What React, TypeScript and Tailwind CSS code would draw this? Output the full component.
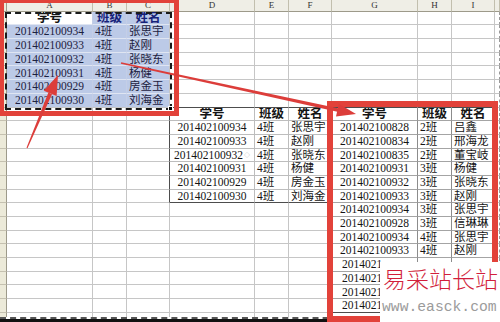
import React from 'react';

const WIDTHS = ['w-[86px]', 'w-[34px]', 'w-[43px]', 'w-[85px]', 'w-[34px]', 'w-[43px]', 'w-[86px]', 'w-[34px]', 'w-[43px]', 'w-[5px]'];
const LETTERS = ['A', 'B', 'C', 'D', 'E', 'F', 'G', 'H', 'I', ''];
const HEAD = ['学号', '班级', '姓名'];

const leftData = [
  ['201402100934', '4班', '张思宇'],
  ['201402100933', '4班', '赵刚'],
  ['201402100932', '4班', '张晓东'],
  ['201402100931', '4班', '杨健'],
  ['201402100929', '4班', '房金玉'],
  ['201402100930', '4班', '刘海金'],
];

const rightData = [
  ['201402100828', '2班', '吕鑫'],
  ['201402100834', '2班', '邢海龙'],
  ['201402100835', '2班', '董宝岐'],
  ['201402100931', '3班', '杨健'],
  ['201402100932', '3班', '张晓东'],
  ['201402100933', '3班', '赵刚'],
  ['201402100934', '3班', '张思宇'],
  ['201402100928', '3班', '信琳琳'],
  ['201402100934', '4班', '张思宇'],
  ['201402100933', '4班', '赵刚'],
  ['2014021', '', ''],
  ['2014021', '', ''],
  ['2014021', '', ''],
  ['2014021', '', ''],
];

type Cell = { t: string; k: 'head' | 'num' | 'txt' | 'cut' } | null;

function getCell(r: number, c: number): Cell {
  if (r === 1 && c <= 2) return { t: HEAD[c], k: 'head' };
  if (r >= 2 && r <= 7 && c <= 2) return { t: leftData[r - 2][c], k: c === 0 ? 'num' : 'txt' };
  if (r === 8 && c >= 3 && c <= 8) return { t: HEAD[(c - 3) % 3], k: 'head' };
  if (r >= 9 && r <= 14 && c >= 3 && c <= 5) return { t: leftData[r - 9][c - 3], k: c === 3 ? 'num' : 'txt' };
  if (r >= 9 && r <= 22 && c >= 6 && c <= 8) {
    const v = rightData[r - 9][c - 6];
    if (c === 6 && r >= 19) return { t: v, k: 'cut' };
    return { t: v, k: c === 6 ? 'num' : 'txt' };
  }
  return null;
}

const inMid = (r: number, c: number) => r >= 8 && r <= 14 && c >= 3 && c <= 5;
const inRight = (r: number, c: number) => r >= 8 && r <= 22 && c >= 6 && c <= 8;
const inSel = (r: number, c: number) => r >= 1 && r <= 7 && c >= 0 && c <= 2;

function rightBorder(r: number, c: number) {
  if (c === 9) return 'border-r-[#9a9a9a] [border-right-style:dashed]';
  if (inMid(r, c) !== inMid(r, c + 1) || inRight(r, c) !== inRight(r, c + 1)) return 'border-r-[#4d4d4d]';
  if (inRight(r, c)) return 'border-r-[#8c8c8c]';
  if (inMid(r, c)) return 'border-r-[#bdbdbd]';
  if (inSel(r, c) && inSel(r, c + 1)) return 'border-r-[#c4cee6]';
  return 'border-r-[#c6c6c6]';
}

function bottomBorder(r: number, c: number) {
  if (inMid(r, c) !== inMid(r + 1, c) || inRight(r, c) !== inRight(r + 1, c)) return 'border-b-[#4d4d4d]';
  if (inRight(r, c)) return 'border-b-[#a4a4a4]';
  if (inMid(r, c)) return 'border-b-[#bdbdbd]';
  if (inSel(r, c) && inSel(r + 1, c)) return 'border-b-[#dfe5f2]';
  return 'border-b-[#c6c6c6]';
}

function CellView({ r, c }: { r: number; c: number }) {
  const cell = getCell(r, c);
  const sel = inSel(r, c) && !(r === 1 && c === 0);
  const bg = sel ? 'bg-[#bccae7]' : 'bg-white';
  let align = 'justify-center';
  let txt = 'text-[11.5px]';
  let color = sel ? 'text-[#1c2140]' : 'text-[#141414]';
  if (cell) {
    if (cell.k === 'head') {
      txt = 'text-[12.5px] font-bold';
      if (sel) color = 'text-[#16227a]';
    } else if (cell.k === 'txt') {
      align = 'justify-start pl-[2px]';
    } else if (cell.k === 'cut') {
      align = 'justify-start pl-[10px]';
    }
  }
  const marker = r === 11 && c === 3;
  return (
    <div
      className={`relative shrink-0 h-full border-r border-b flex items-center overflow-hidden whitespace-nowrap leading-none pt-[1px] ${WIDTHS[c]} ${bg} ${align} ${txt} ${color} ${rightBorder(r, c)} ${bottomBorder(r, c)}`}
    >
      {cell && cell.t ? cell.t : null}
      {marker ? <span className="ml-[1px] text-[6px] leading-none text-[#aaa]">◇</span> : null}
    </div>
  );
}

export default function App() {
  const rows = Array.from({ length: 23 }, (_, i) => i + 1);
  const cols = Array.from({ length: 10 }, (_, i) => i);
  return (
    <div className="w-[500px] h-[322px] relative overflow-hidden bg-white font-['Liberation_Serif','Noto_Sans_CJK_SC',serif] text-[#141414]">
      <div className="flex flex-col h-[322px]">
        <div className="h-[317px] overflow-hidden flex flex-col">
          <div className="flex h-[11.7px] shrink-0">
            <div className="w-[7px] shrink-0 h-full bg-[#ecead9] border-r border-b border-r-[#9d9a8a] border-b-[#9d9a8a]" />
            {cols.map((c) => (
              <div
                key={c}
                className={`shrink-0 h-full flex items-center justify-center bg-[#efeee6] border-r border-b border-r-[#c2bfae] border-b-[#9d9a8a] text-[9px] leading-none text-[#333] ${WIDTHS[c]}`}
              >
                {LETTERS[c]}
              </div>
            ))}
          </div>
          {rows.map((r) => (
            <div key={r} className="flex h-[13.7px] shrink-0">
              <div className="w-[7px] shrink-0 h-full bg-[#ecead9] border-r border-b border-r-[#9d9a8a] border-b-[#c5c1b0]" />
              {cols.map((c) => (
                <CellView key={c} r={r} c={c} />
              ))}
            </div>
          ))}
        </div>
        <div className="h-[2px] shrink-0 border-t-2 border-dashed border-[#555] bg-white" />
        <div className="h-[3px] shrink-0 bg-[#111]" />
      </div>

      <div className="absolute left-[5px] top-[12px] w-[167px] h-[98px] border-2 border-dashed border-[#1a1a1a]" />
      <div className="absolute left-[168px] top-[106px] w-[5px] h-[5px] bg-black border border-white" />

      <div className="absolute left-[-1px] top-[-2px] w-[180px] h-[118px] border-[5px] border-[#e2423a]" />
      <div className="absolute left-[327px] top-[101px] w-[171px] h-[221px] border-[6px] border-[#e2423a]" />

      <svg className="absolute left-0 top-0 pointer-events-none" width="500" height="322" viewBox="0 0 500 322">
        <polygon points="121.2,62.2 340.4,108.8 339.6,112.2 120.8,63.8" fill="#dc3d3a" />
        <polygon points="356,114 338.8,103.7 336,116.4" fill="#dc3d3a" />
        <polygon points="26.5,147.8 27.5,148.2 52,94.2 48.4,92.6" fill="#dc3d3a" />
        <polygon points="58,75 56.6,96.1 43.8,90.7" fill="#dc3d3a" />
      </svg>

      <div className="absolute left-[380px] top-[262px] w-[120px] h-[60px] bg-white">
        <div className="pl-[3px] pt-[5px] text-[23px] leading-[23px] text-[#d21f3c] font-['Noto_Sans_CJK_SC',sans-serif] font-light whitespace-nowrap">
          易采站长站
        </div>
        <div className="pl-[2px] pt-[10px] text-[14.7px] leading-[15px] text-[#9b9b9b] font-['Liberation_Mono',monospace] whitespace-nowrap">
          www.easck.com
        </div>
      </div>
    </div>
  );
}
